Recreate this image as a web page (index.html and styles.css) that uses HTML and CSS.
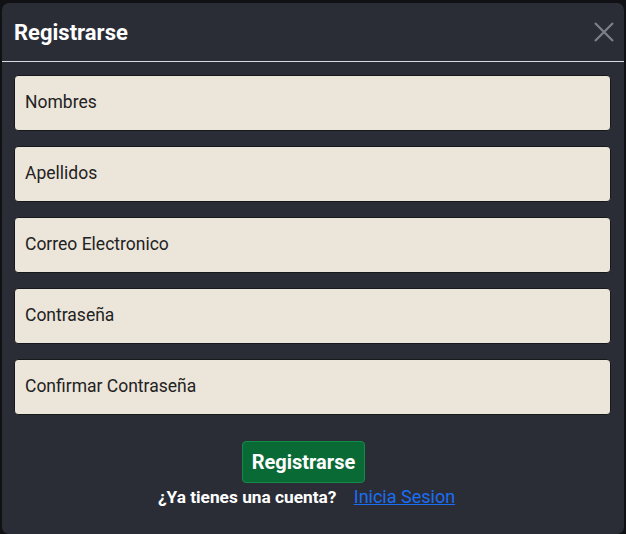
FILE: index.html
```html
<!DOCTYPE html>
<html lang="es">
<head>
<meta charset="utf-8">
<title>Registrarse</title>
<link rel="stylesheet" href="styles.css">
</head>
<body>
<div class="modal">
  <div class="modal-header">
    <h1 class="modal-title">Registrarse</h1>
    <button class="close" aria-label="Cerrar">
      <svg width="20" height="20" viewBox="0 0 20 20"><path d="M1 1 L19 19 M19 1 L1 19" stroke="#7d8088" stroke-width="2.2" fill="none"/></svg>
    </button>
  </div>
  <form class="modal-body">
    <div class="field">Nombres</div>
    <div class="field">Apellidos</div>
    <div class="field">Correo Electronico</div>
    <div class="field">Contraseña</div>
    <div class="field">Confirmar Contraseña</div>
    <div class="actions">
      <button type="button" class="btn">Registrarse</button>
      <p class="login">¿Ya tienes una cuenta? <a href="#">Inicia Sesion</a></p>
    </div>
  </form>
</div>
</body>
</html>
```

FILE: styles.css
```css
* { box-sizing: border-box; }
html, body { margin: 0; height: 100%; }
body {
  background: #101115;
  font-family: Roboto, "Noto Sans", sans-serif;
  overflow: hidden;
  padding: 3px 2px 0 2px;
}
.modal {
  background: #2a2d36;
  border-radius: 7px;
  height: 531px;
  overflow: hidden;
}
.modal-header {
  height: 59px;
  border-bottom: 1.5px solid #d9dce4;
  display: flex;
  align-items: center;
  justify-content: space-between;
  padding: 0 10px 0 12px;
}
.modal-title {
  margin: 0;
  color: #fff;
  font-size: 22px;
  font-weight: 700;
}
.close {
  background: none;
  border: 0;
  padding: 0;
  width: 20px;
  height: 20px;
  cursor: pointer;
  display: flex;
}
.modal-body {
  padding: 13px 13px 0 12px;
  display: flex;
  flex-direction: column;
  gap: 15px;
}
.field {
  height: 56px;
  background: #ece5da;
  border: 1px solid #17181c;
  border-radius: 4px;
  color: #222;
  font-size: 17.5px;
  display: flex;
  align-items: center;
  padding: 0 10px 3px;
}
.actions {
  display: flex;
  flex-direction: column;
  align-items: center;
  margin-top: 11px;
}
.btn {
  width: 123px;
  height: 42px;
  margin-right: 18px;
  background: #0a6a36;
  border: 1px solid #138a48;
  border-radius: 4px;
  color: #fff;
  font-family: Roboto, sans-serif;
  font-size: 20px;
  font-weight: 700;
}
.login {
  margin: 3px 12px 0 0;
  color: #fff;
  font-size: 17.3px;
  font-weight: 700;
}
.login a {
  color: #1a6ef5;
  font-weight: 400;
  font-size: 18px;
  margin-left: 13px;
}
```
